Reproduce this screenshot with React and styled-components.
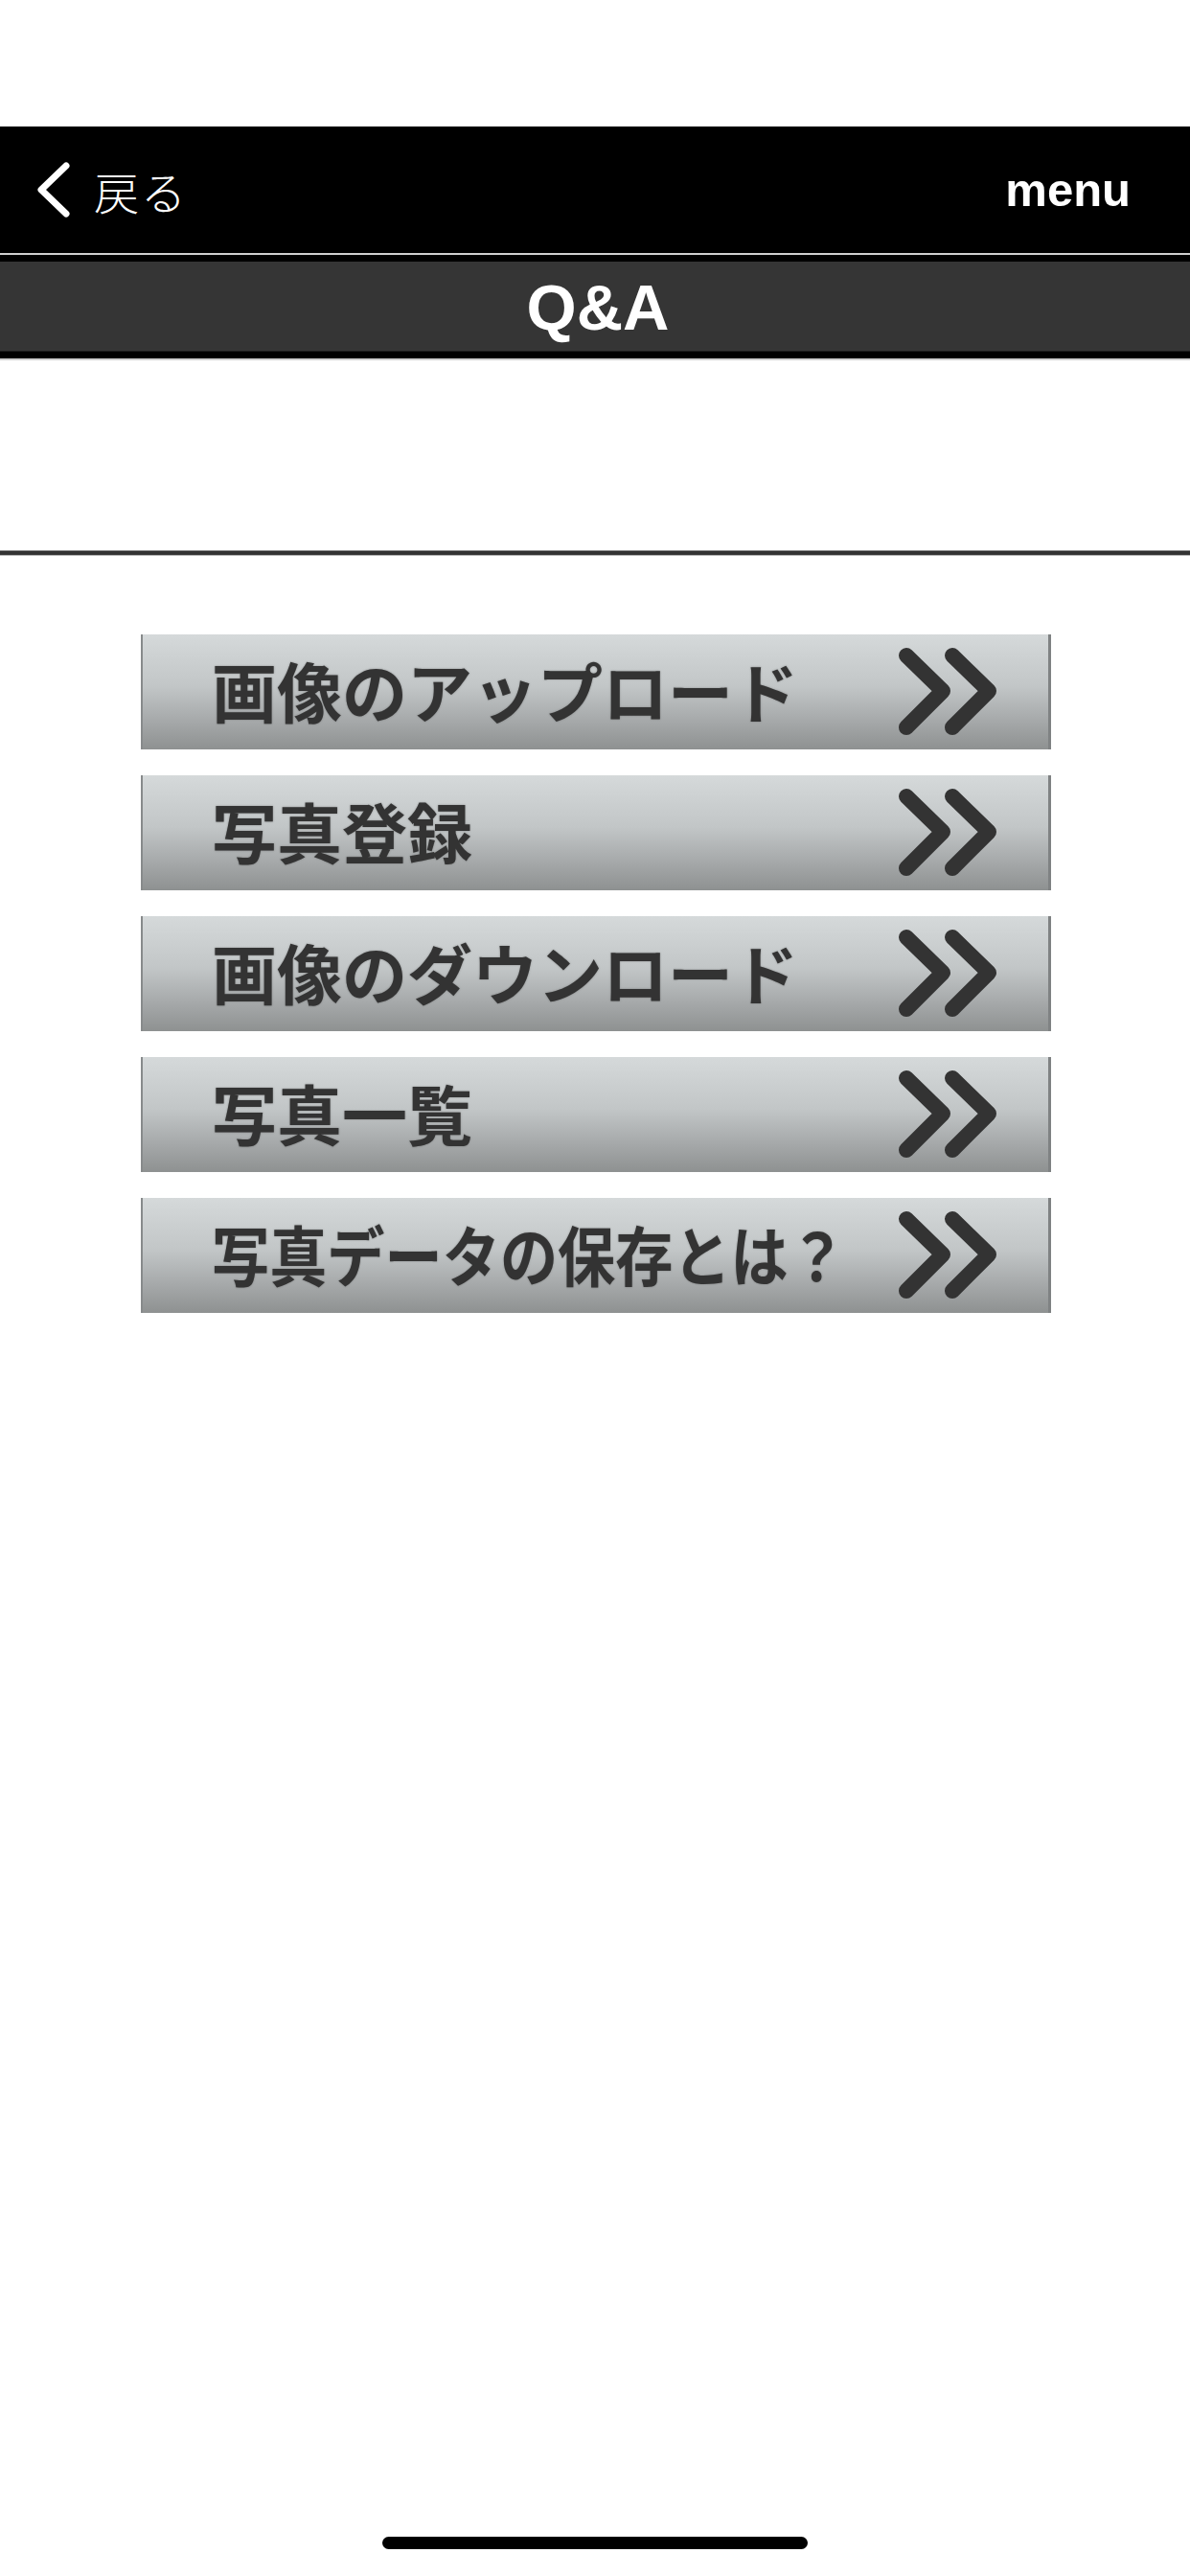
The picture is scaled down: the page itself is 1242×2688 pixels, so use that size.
import React from "react";
import styled, { createGlobalStyle } from "styled-components";

const GlobalStyle = createGlobalStyle`
  html, body {
    margin: 0;
    padding: 0;
    background: #ffffff;
  }
  body {
    font-family: "Liberation Sans", "Noto Sans CJK JP", sans-serif;
  }
`;

const Page = styled.div`
  display: flex;
  flex-direction: column;
  min-height: 100vh;
  background: #ffffff;
`;

const StatusSpace = styled.div`
  height: 132px;
`;

const NavBar = styled.div`
  display: flex;
  align-items: center;
  justify-content: space-between;
  height: 132px;
  padding: 0 62px 0 36px;
  background: #000000;
  color: #ffffff;
  border-bottom: 2px solid #cfcfcf;
`;

const BackLink = styled.div`
  display: flex;
  align-items: center;
  gap: 22px;
  font-family: "Noto Sans CJK JP", sans-serif;
  font-weight: 300;
  font-size: 47px;
  letter-spacing: 2px;
`;

const MenuLink = styled.div`
  font-family: "Liberation Sans", Arial, sans-serif;
  font-weight: 700;
  font-size: 49px;
`;

const TitleBar = styled.div`
  display: flex;
  align-items: center;
  justify-content: center;
  height: 94px;
  padding-left: 6px;
  background: #353535;
  border-top: 7px solid #000000;
  border-bottom: 7px solid #000000;
  box-shadow: 0 2px 0 #cfcfcf, inset 0 -1px 0 #1c1c1c;
  color: #ffffff;
  font-family: "Liberation Sans", Arial, sans-serif;
  font-weight: 700;
  font-size: 67px;
`;

const Blank = styled.div`
  height: 200px;
`;

const Divider = styled.div`
  height: 4px;
  background: #333333;
  border-top: 1px solid #9a9a9a;
  border-bottom: 1px solid #b0b0b0;
`;

const List = styled.div`
  display: flex;
  flex-direction: column;
  gap: 27px;
  padding: 82px 145px 0 147px;
`;

const LinkButton = styled.div`
  display: flex;
  align-items: center;
  justify-content: space-between;
  height: 120px;
  padding: 0 50px 0 72px;
  background: linear-gradient(#d5d9da 0%, #c2c6c7 45%, #a6a9aa 75%, #8e9191 100%);
  border-left: 2px solid #878a8b;
  border-right: 3px solid #7f8283;
  cursor: pointer;
`;

const Label = styled.span`
  display: inline-block;
  min-width: 0;
  margin-top: -4px;
  font-family: "Noto Sans CJK JP", sans-serif;
  font-weight: 700;
  font-size: 68px;
  line-height: 1;
  color: #333333;
  white-space: nowrap;
  text-shadow: 0 0 2px rgba(51, 51, 51, 0.45);
  transform: scaleX(${(p) => p.$squeeze || 1});
  transform-origin: left center;
`;

const Arrow = styled.svg`
  flex-shrink: 0;
`;

const HomeBar = styled.div`
  width: 444px;
  height: 13px;
  margin: auto auto 28px;
  border-radius: 7px;
  background: #000000;
`;

const BackChevron = () => (
  <svg width="40" height="58" viewBox="0 0 40 58">
    <polyline
      points="33,4 7,29 33,54"
      fill="none"
      stroke="#ffffff"
      strokeWidth="7"
      strokeLinecap="round"
      strokeLinejoin="round"
    />
  </svg>
);

const DoubleArrow = () => (
  <Arrow width="108" height="94" viewBox="0 0 108 94">
    <g
      fill="none"
      stroke="#333333"
      strokeWidth="16"
      strokeLinecap="round"
      strokeLinejoin="round"
    >
      <polyline points="10,9 48,46 10,84" />
      <polyline points="58,9 96,46 58,84" />
    </g>
  </Arrow>
);

const items = [
  { label: "画像のアップロード" },
  { label: "写真登録" },
  { label: "画像のダウンロード" },
  { label: "写真一覧" },
  { label: "写真データの保存とは？", squeeze: 0.885 },
];

export default function App() {
  return (
    <Page>
      <GlobalStyle />
      <StatusSpace />
      <NavBar>
        <BackLink>
          <BackChevron />
          戻る
        </BackLink>
        <MenuLink>menu</MenuLink>
      </NavBar>
      <TitleBar>Q&amp;A</TitleBar>
      <Blank />
      <Divider />
      <List>
        {items.map((item) => (
          <LinkButton key={item.label}>
            <Label $squeeze={item.squeeze}>{item.label}</Label>
            <DoubleArrow />
          </LinkButton>
        ))}
      </List>
      <HomeBar />
    </Page>
  );
}
